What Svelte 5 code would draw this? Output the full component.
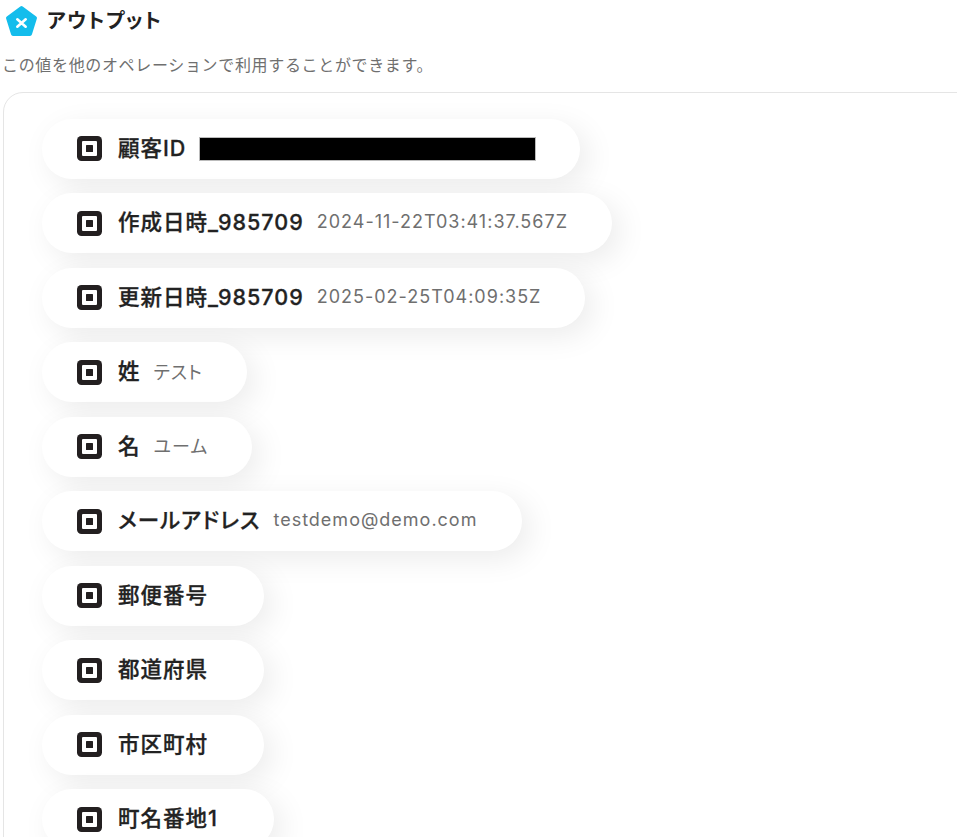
<script>
  const rows = [
    { label: '顧客ID', redacted: true, width: 538 },
    { label: '作成日時_985709', value: '2024-11-22T03:41:37.567Z', width: 570 },
    { label: '更新日時_985709', value: '2025-02-25T04:09:35Z', width: 543 },
    { label: '姓', value: 'テスト', width: 205 },
    { label: '名', value: 'ユーム', width: 210 },
    { label: 'メールアドレス', value: 'testdemo@demo.com', width: 480 },
    { label: '郵便番号', width: 222 },
    { label: '都道府県', width: 222 },
    { label: '市区町村', width: 222 },
    { label: '町名番地1', width: 232 }
  ];
</script>

<div class="page">
  <header class="head">
    <svg class="logo" viewBox="0 0 33 32" width="33" height="32" aria-hidden="true">
      <path d="M16.5 3 30 13 25 29H8L3 13Z" fill="#14bdec" stroke="#14bdec" stroke-width="4" stroke-linejoin="round"/>
      <path d="M12.3 14.3 20.7 21.7M20.7 14.3 12.3 21.7" stroke="#fff" stroke-width="2.6" stroke-linecap="round" fill="none"/>
    </svg>
    <h2>アウトプット</h2>
  </header>
  <p class="desc">この値を他のオペレーションで利用することができます。</p>
  <section class="card">
    {#each rows as row}
      <div class="pill" style="width: {row.width}px">
        <svg class="icon" viewBox="0 0 25 25" width="25" height="25" aria-hidden="true">
          <rect width="25" height="25" rx="4.5" fill="#231f20"/>
          <rect x="5" y="5" width="15" height="15" rx="1" fill="#fff"/>
          <rect x="9" y="9" width="7" height="7" rx="0.5" fill="#231f20"/>
        </svg>
        <span class="label">{row.label}</span>
        {#if row.redacted}
          <span class="redact"></span>
        {:else if row.value}
          <span class="value">{row.value}</span>
        {/if}
      </div>
    {/each}
  </section>
</div>

<style>
  :global(body) {
    margin: 0;
    background: #fff;
    overflow: hidden;
  }
  .page {
    height: 837px;
    overflow: hidden;
    font-family: "Inter", "Noto Sans CJK JP", sans-serif;
    font-feature-settings: "palt";
    color: #222;
    box-sizing: border-box;
    padding-top: 5px;
  }
  .head {
    display: flex;
    align-items: center;
    gap: 9px;
    padding-left: 5px;
    height: 32px;
  }
  .logo {
    flex: none;
  }
  h2 {
    margin: 0;
    font-size: 20px;
    font-weight: 700;
    letter-spacing: 1.5px;
    line-height: 32px;
  }
  .desc {
    margin: 17px 0 0 2px;
    font-size: 16px;
    font-feature-settings: normal;
    line-height: 22px;
    letter-spacing: 0.66px;
    color: #6f6f6f;
    white-space: nowrap;
  }
  .card {
    margin: 16px 0 0 3px;
    width: 1100px;
    height: 900px;
    box-sizing: border-box;
    border: 1px solid #e5e5e5;
    border-radius: 20px;
    padding: 25.9px 0 0 38px;
    display: flex;
    flex-direction: column;
    gap: 14.5px;
  }
  .pill {
    flex: none;
    height: 60px;
    box-sizing: border-box;
    border-radius: 30px;
    background: #fff;
    box-shadow: 8px 8px 30px rgba(0, 0, 0, 0.08);
    display: flex;
    align-items: center;
    padding-left: 35px;
    white-space: nowrap;
  }
  .icon {
    flex: none;
    margin-right: 16px;
  }
  .label {
    font-size: 21.5px;
    font-weight: 500;
    letter-spacing: 1px;
    color: #222;
    -webkit-text-stroke: 0.3px #222;
    margin: 0 13px 5px 0;
  }
  .value {
    font-size: 18px;
    letter-spacing: 1px;
    color: #6f6f6f;
    margin-bottom: 3px;
  }
  .redact {
    width: 335px;
    height: 22px;
    margin-left: 1px;
    background: #000;
    outline: 1px solid #bbb;
  }
</style>
